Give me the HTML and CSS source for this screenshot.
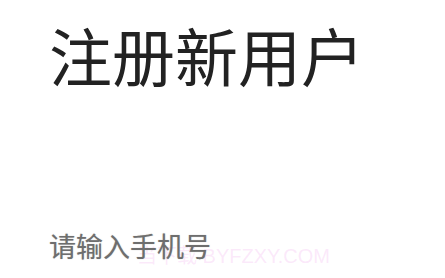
FILE: index.html
```html
<!DOCTYPE html>
<html lang="zh-CN">
<head>
<meta charset="utf-8">
<link rel="stylesheet" href="styles.css">
</head>
<body>
<main class="page">
  <h1 class="title">注册新用户</h1>
  <div class="field">
    <span class="placeholder">请输入手机号</span>
    <span class="watermark">当下载 BYFZXY.COM</span>
  </div>
</main>
</body>
</html>
```
FILE: styles.css
```css
html, body {
  margin: 0;
  padding: 0;
  background: #ffffff;
  width: 445px;
  height: 278px;
  overflow: hidden;
}
.page {
  display: flex;
  flex-direction: column;
  padding-left: 49px;
  font-family: "Noto Sans CJK SC", "Noto Sans", sans-serif;
}
.title {
  margin: 22px 0 0 0;
  font-size: 63px;
  line-height: 1;
  font-weight: 400;
  color: #222222;
}
.field {
  position: relative;
  margin-top: 147px;
}
.placeholder {
  font-size: 27px;
  line-height: 1;
  color: #6e6e6e;
  position: relative;
  z-index: 1;
  text-shadow: 0 0 1px rgba(110, 110, 110, 0.5);
}
.watermark {
  position: absolute;
  left: 88px;
  top: 14px;
  font-family: "Liberation Sans", "Noto Sans CJK SC", sans-serif;
  font-size: 20px;
  line-height: 1;
  color: rgba(236, 140, 230, 0.2);
  white-space: nowrap;
}
```
